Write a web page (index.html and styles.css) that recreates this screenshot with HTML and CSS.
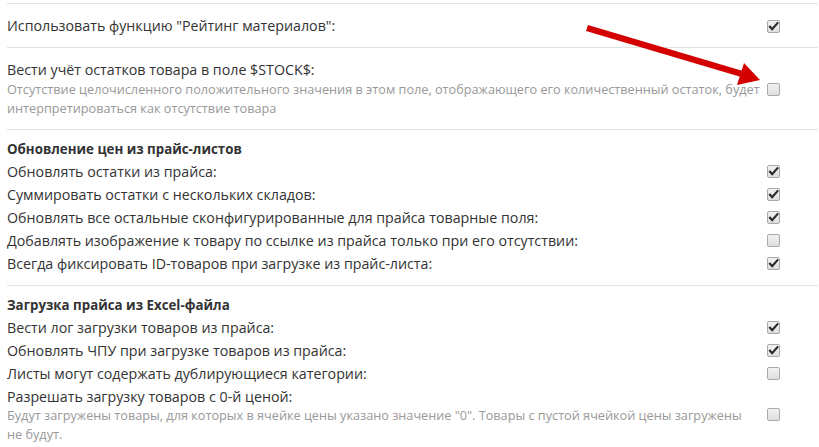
FILE: index.html
```html
<!DOCTYPE html>
<html lang="ru">
<head>
<meta charset="utf-8">
<link rel="stylesheet" href="styles.css">
</head>
<body>
<div class="page">
  <div class="section single">
    <div class="row">
      <div class="label">Использовать функцию "Рейтинг материалов":</div>
      <div class="cbcell"><span class="cb checked"><svg viewBox="0 0 13 13"><path d="M3 6.8 L5.2 9.2 L10.4 3.2" /></svg></span></div>
    </div>
  </div>
  <div class="section single">
    <div class="row">
      <div class="label">Вести учёт остатков товара в поле $STOCK$:
        <div class="desc">Отсутствие целочисленного положительного значения в этом поле, отображающего его количественный остаток, будет интерпретироваться как отсутствие товара</div>
      </div>
      <div class="cbcell"><span class="cb"></span></div>
    </div>
  </div>
  <div class="section group">
    <div class="heading">Обновление цен из прайс-листов</div>
    <div class="row"><div class="label">Обновлять остатки из прайса:</div><div class="cbcell"><span class="cb checked"><svg viewBox="0 0 13 13"><path d="M3 6.8 L5.2 9.2 L10.4 3.2" /></svg></span></div></div>
    <div class="row"><div class="label">Суммировать остатки с нескольких складов:</div><div class="cbcell"><span class="cb checked"><svg viewBox="0 0 13 13"><path d="M3 6.8 L5.2 9.2 L10.4 3.2" /></svg></span></div></div>
    <div class="row"><div class="label">Обновлять все остальные сконфигурированные для прайса товарные поля:</div><div class="cbcell"><span class="cb checked"><svg viewBox="0 0 13 13"><path d="M3 6.8 L5.2 9.2 L10.4 3.2" /></svg></span></div></div>
    <div class="row"><div class="label">Добавлять изображение к товару по ссылке из прайса только при его отсутствии:</div><div class="cbcell"><span class="cb"></span></div></div>
    <div class="row"><div class="label">Всегда фиксировать ID-товаров при загрузке из прайс-листа:</div><div class="cbcell"><span class="cb checked"><svg viewBox="0 0 13 13"><path d="M3 6.8 L5.2 9.2 L10.4 3.2" /></svg></span></div></div>
  </div>
  <div class="section group last">
    <div class="heading">Загрузка прайса из Excel-файла</div>
    <div class="row"><div class="label">Вести лог загрузки товаров из прайса:</div><div class="cbcell"><span class="cb checked"><svg viewBox="0 0 13 13"><path d="M3 6.8 L5.2 9.2 L10.4 3.2" /></svg></span></div></div>
    <div class="row"><div class="label">Обновлять ЧПУ при загрузке товаров из прайса:</div><div class="cbcell"><span class="cb checked"><svg viewBox="0 0 13 13"><path d="M3 6.8 L5.2 9.2 L10.4 3.2" /></svg></span></div></div>
    <div class="row"><div class="label">Листы могут содержать дублирующиеся категории:</div><div class="cbcell"><span class="cb"></span></div></div>
    <div class="row"><div class="label">Разрешать загрузку товаров с 0-й ценой:
        <div class="desc">Будут загружены товары, для которых в ячейке цены указано значение "0". Товары с пустой ячейкой цены загружены не будут.</div>
      </div><div class="cbcell"><span class="cb"></span></div></div>
  </div>
  <svg class="arrow" width="819" height="447" viewBox="0 0 819 447">
    <line x1="587" y1="28" x2="742" y2="74" stroke="#d40000" stroke-width="6.5"/>
    <polygon points="760,80 737,85 744,63" fill="#d40000"/>
  </svg>
</div>
</body>
</html>
```

FILE: styles.css
```css
html, body {
  margin: 0;
  padding: 0;
  background: #fff;
  overflow: hidden;
}
body {
  font-family: "Open Sans", "Liberation Sans", sans-serif;
  color: #333;
}
.page {
  position: relative;
  padding: 3px 1px 0 7px;
}
.section {
  border-top: 1px solid #e2e2e2;
}
.section.single {
  padding: 12px 0 11px;
}
.section.group {
  padding: 8px 0 10px;
}
.section.last {
  padding-bottom: 0;
}
.heading {
  font-size: 13.3px;
  font-weight: 700;
  line-height: 20px;
  padding-top: 1px;
  padding-bottom: 1px;
}
.row {
  display: grid;
  grid-template-columns: 1fr 58px;
  align-items: center;
}
.group .row {
  min-height: 23px;
}
.label {
  font-size: 14.25px;
  line-height: 20px;
}
.group .label {
  line-height: 23px;
}
.desc {
  font-size: 12.7px;
  line-height: 19px;
  color: #999;
}
.group .desc {
  margin-top: -2px;
}
.cbcell {
  padding-left: 7px;
  display: flex;
  align-items: center;
}
.cb {
  display: block;
  width: 11px;
  height: 11px;
  border: 1px solid #a9a9a9;
  border-radius: 2px;
  background: linear-gradient(#f2f2f2, #dedede);
  position: relative;
}
.cb svg {
  position: absolute;
  left: -1px;
  top: -1px;
  width: 13px;
  height: 13px;
}
.cb svg path {
  fill: none;
  stroke: #2b2b2b;
  stroke-width: 2.2;
  stroke-linecap: square;
}
.arrow {
  position: absolute;
  left: 0;
  top: 0;
  pointer-events: none;
}
```
